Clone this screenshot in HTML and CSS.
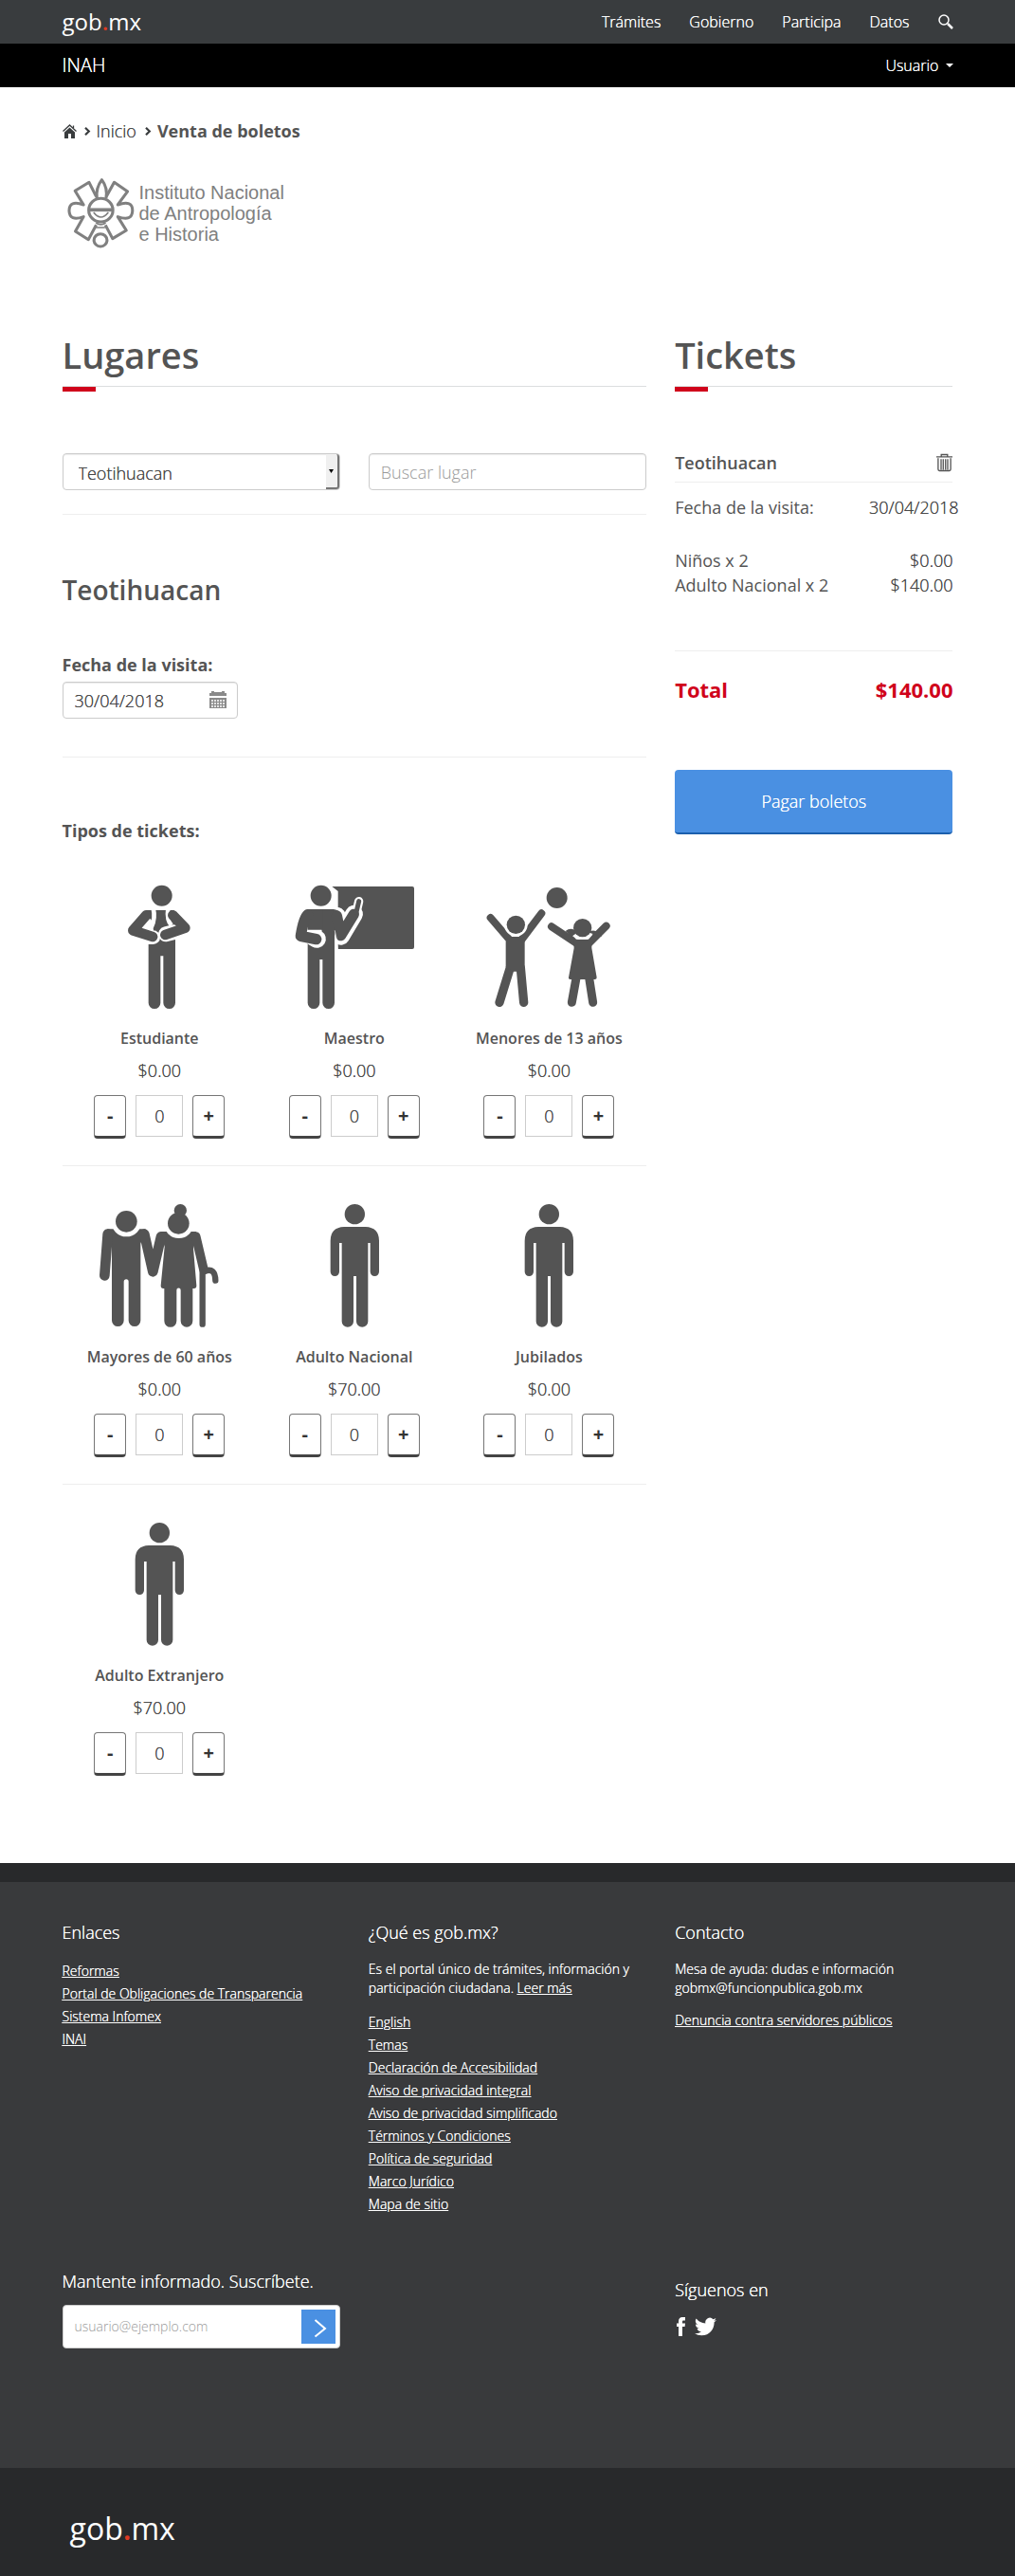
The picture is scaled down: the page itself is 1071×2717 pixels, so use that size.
FILE: index.html
```html
<!DOCTYPE html>
<html lang="es">
<head>
<meta charset="utf-8">
<meta name="viewport" content="width=device-width, initial-scale=1">
<title>Venta de boletos - INAH</title>
<link rel="stylesheet" href="styles.css">
</head>
<body>
<svg class="sprite" aria-hidden="true">
  <symbol id="adult" viewBox="746 57 450 396">
    <circle cx="972" cy="92" r="32"/>
    <path d="M938 132H1006Q1049 134 1049 176V274a14 14 0 0 1-28 0V183h-7V431a18.500 18.500 0 0 1-37 0V288h-9V431a18.500 18.500 0 0 1-37 0V183h-8V274a14 14 0 0 1-28 0V176Q895 134 938 132Z"/>
  </symbol>
</svg>

<header>
  <div class="topbar">
    <div class="container bar">
      <a class="brand" href="#">gob<span class="dot">.</span>mx</a>
      <nav class="nav">
        <a href="#">Trámites</a>
        <a href="#">Gobierno</a>
        <a href="#">Participa</a>
        <a href="#">Datos</a>
        <a href="#" aria-label="Buscar"><svg class="search" viewBox="0 0 16 16"><circle cx="6" cy="6" r="5" fill="none" stroke="#fff" stroke-width="1.500"/><path d="M10 10l5 5" stroke="#fff" stroke-width="2.500"/></svg></a>
      </nav>
    </div>
  </div>
  <div class="subbar">
    <div class="container bar">
      <a class="site" href="#">INAH</a>
      <button class="user" type="button">Usuario <span class="caret"></span></button>
    </div>
  </div>
</header>

<main class="container">
  <nav class="crumbs" aria-label="Ruta">
    <a href="#" aria-label="Portada"><svg class="home" viewBox="0 0 15 15"><path d="M7.500 3.500L13 8.500V15H9V10H6V15H2V8.500Z" fill="#393c3e"/><path d="M.5 7.500L7.500 1L14.500 7.500M11.500 1.500V4" fill="none" stroke="#393c3e" stroke-width="1.300"/></svg></a>
    <svg class="chev" viewBox="0 0 7 9"><path d="M1 .8L4.800 4.500L1 8.200" fill="none" stroke="#393c3e" stroke-width="2.200"/></svg>
    <a class="crumb" href="#">Inicio</a>
    <svg class="chev" viewBox="0 0 7 9"><path d="M1 .8L4.800 4.500L1 8.200" fill="none" stroke="#393c3e" stroke-width="2.200"/></svg>
    <strong>Venta de boletos</strong>
  </nav>

  <div class="inah">
    <svg viewBox="68 186 74 78" aria-hidden="true"><g transform="scale(.3444 .3333)" fill="none" stroke="#808080" stroke-width="9" stroke-linejoin="round">
      <circle cx="306" cy="665" r="37"/>
      <path d="M294 628Q290 595 309 569Q328 595 322 628"/>
      <path d="M292 622L270 577L227 604L253 648Q209 632 209 667Q210 702 253 686L228 732L268 758L292 712"/>
      <path d="M323 622L347 577L388 606L358 648Q404 632 403 667Q402 702 358 686L384 729L342 755L320 712"/>
      <circle cx="305" cy="760" r="20"/>
      <path d="M270 664H342" stroke-width="11"/>
      <path d="M284 672Q306 702 329 672M291 705Q306 716 321 705M291 720H319" stroke-width="5"/>
    </g></svg>
    <p>Instituto Nacional<br>de Antropología<br>e Historia</p>
  </div>

  <div class="columns">
    <section class="places">
      <h2 class="title">Lugares</h2>
      <form class="filters">
        <div class="select">
          <select class="field" aria-label="Lugar"><option>Teotihuacan</option></select>
          <span class="select-arrow"><svg width="5" height="4" viewBox="0 0 5 4"><path d="M0 0H5L2.500 4Z"/></svg></span>
        </div>
        <input class="field" type="text" placeholder="Buscar lugar" aria-label="Buscar lugar">
      </form>
      <h3 class="place">Teotihuacan</h3>
      <div class="visit">
        <label for="date">Fecha de la visita:</label>
        <div class="date">
          <input class="field" id="date" type="text" value="30/04/2018">
          <svg class="calendar" viewBox="0 0 18 18" aria-hidden="true"><path d="M0 2H2V0H5V1H13V0H16V2H18V5H0ZM0 7H18V18H0Z" fill="#8a8a8a"/><path d="M2 10h14M2 13h14M2 16h14" stroke="#fff" stroke-width="1.500" stroke-dasharray="2 1"/></svg>
        </div>
      </div>
      <h4 class="types">Tipos de tickets:</h4>

      <div class="row">
        <article class="ticket">
          <svg class="figure" viewBox="130 279 450 396" aria-hidden="true">
            <circle cx="363" cy="314" r="33"/>
            <path d="M314 360H402L406 400V653a19 19 0 0 1-38 0V505h-9V653a19 19 0 0 1-38 0V400Z"/>
            <g fill="none" stroke-linecap="round" stroke-linejoin="round">
              <path d="M336 354Q344 385 330 414M383 354Q378 392 394 408" stroke="#fff" stroke-width="14" stroke-linecap="butt"/>
              <path d="M312 404L318 446L336 446" stroke="#fff" stroke-width="44"/>
              <path d="M376 436L400 430" stroke="#fff" stroke-width="48"/>
              <path d="M314 376L272 424L334 444M398 376L437 416L374 438" stroke="#545454" stroke-width="32"/>
            </g>
          </svg>
          <h5>Estudiante</h5>
          <p>$0.00</p>
          <div class="stepper"><button type="button">-</button><input type="text" value="0" aria-label="Cantidad Estudiante"><button type="button">+</button></div>
        </article>
        <article class="ticket">
          <svg class="figure" viewBox="26 39 450 396" aria-hidden="true">
            <path d="M180 45H434Q440 45 440 51V237Q440 243 434 243H199V60Z"/>
            <g fill="none" stroke="#fff" stroke-linejoin="round" stroke-linecap="round">
              <path d="M195 138L208 202L250 132" stroke-width="56"/>
              <path d="M257 126L265 92" stroke-width="28"/>
            </g>
            <path d="M100 100H185L199 243V260H100Z" fill="#fff"/>
            <circle cx="145" cy="74" r="44" fill="#fff"/>
            <circle cx="145" cy="74" r="33"/>
            <path d="M103 117H185Q205 120 208 135L188 190V413a19 19 0 0 1-38 0V276h-9V413a19 19 0 0 1-38 0V160Z"/>
            <g fill="none" stroke-linejoin="round" stroke-linecap="round">
              <path d="M118 180L122 205L132 211" stroke="#fff" stroke-width="57"/>
              <path d="M105 117L150 117V182H103Z" fill="#545454"/>
              <path d="M103 134Q90 144 81 202L130 212M195 138L208 200L249 133" stroke="#545454" stroke-width="34"/>
              <path d="M257 126L265 92" stroke="#545454" stroke-width="15"/>
              <path d="M189 185L196 217" stroke="#fff" stroke-width="2"/>
            </g>
          </svg>
          <h5>Maestro</h5>
          <p>$0.00</p>
          <div class="stepper"><button type="button">-</button><input type="text" value="0" aria-label="Cantidad Maestro"><button type="button">+</button></div>
        </article>
        <article class="ticket">
          <svg class="figure" viewBox="643 39 450 396" aria-hidden="true">
            <circle cx="894" cy="81" r="33"/>
            <g fill="none" stroke="#545454" stroke-linecap="round">
              <path d="M684 144L746 216M845 130L780 216" stroke-width="24"/>
              <path d="M746 302L712 412M779 302L789 412" stroke-width="28"/>
              <path d="M877 172L955 224M1050 170L996 224" stroke-width="24"/>
              <path d="M955 335L941 412M996 335L1008 412" stroke-width="27"/>
            </g>
            <path d="M740 204H788L792 220V305L770 314H754L732 300V220ZM946 212H1004V240L1020 333Q1020 339 1014 339H936Q930 339 931 333L948 240Z"/>
            <circle cx="764" cy="166" r="37" fill="#fff"/>
            <circle cx="764" cy="166" r="29"/>
            <path d="M940 196Q975 206 1007 197L994 212H955Z" fill="#fff"/>
            <path d="M921 186Q940 170 960 190L940 204ZM1037 203Q1018 174 990 190Z"/>
            <circle cx="975" cy="176" r="29"/>
          </svg>
          <h5>Menores de 13 años</h5>
          <p>$0.00</p>
          <div class="stepper"><button type="button">-</button><input type="text" value="0" aria-label="Cantidad Menores de 13 años"><button type="button">+</button></div>
        </article>
      </div>

      <div class="row">
        <article class="ticket">
          <svg class="figure" viewBox="130 57 450 396" aria-hidden="true">
            <path d="M190 139H312L296 185V428a19 19 0 0 1-38 0V305a7 7 0 0 0-15 0V428a19 19 0 0 1-38 0V180ZM360 147H472L463 200L473 318Q473 327 465 327H461V430a19 19 0 0 1-38 0V332a6 6 0 0 0-13 0V430a19 19 0 0 1-39 0V327H368Q360 327 360 318L372 195Z"/>
            <g fill="none" stroke="#545454" stroke-linejoin="round" stroke-linecap="round">
              <path d="M192 155L182 286M308 155L335 274L361 163" stroke-width="32"/>
              <path d="M471 162L496 268" stroke-width="29"/>
              <path d="M492 275V440M500 272Q532 260 533 302" stroke-width="19"/>
            </g>
            <circle cx="251" cy="115" r="48" fill="#fff"/>
            <circle cx="417" cy="121" r="47" fill="#fff"/>
            <circle cx="251" cy="115" r="34"/>
            <circle cx="416" cy="121" r="34"/>
            <circle cx="422" cy="80" r="20"/>
          </svg>
          <h5>Mayores de 60 años</h5>
          <p>$0.00</p>
          <div class="stepper"><button type="button">-</button><input type="text" value="0" aria-label="Cantidad Mayores de 60 años"><button type="button">+</button></div>
        </article>
        <article class="ticket">
          <svg class="figure" aria-hidden="true"><use href="#adult"/></svg>
          <h5>Adulto Nacional</h5>
          <p>$70.00</p>
          <div class="stepper"><button type="button">-</button><input type="text" value="0" aria-label="Cantidad Adulto Nacional"><button type="button">+</button></div>
        </article>
        <article class="ticket">
          <svg class="figure" aria-hidden="true"><use href="#adult"/></svg>
          <h5>Jubilados</h5>
          <p>$0.00</p>
          <div class="stepper"><button type="button">-</button><input type="text" value="0" aria-label="Cantidad Jubilados"><button type="button">+</button></div>
        </article>
      </div>

      <div class="row">
        <article class="ticket">
          <svg class="figure" aria-hidden="true"><use href="#adult"/></svg>
          <h5>Adulto Extranjero</h5>
          <p>$70.00</p>
          <div class="stepper"><button type="button">-</button><input type="text" value="0" aria-label="Cantidad Adulto Extranjero"><button type="button">+</button></div>
        </article>
      </div>
    </section>

    <aside class="cart">
      <h2 class="title">Tickets</h2>
      <div class="cart-head">
        <h3>Teotihuacan</h3>
        <button type="button" aria-label="Eliminar"><svg viewBox="0 0 18 20"><path d="M0 3.500H18M5.500 3.500V1H12.500V3.500M2 5V17.500Q2 19 3.500 19H14.500Q16 19 16 17.500V5M5.300 6V18M7.700 6V18M10.300 6V18M12.700 6V18" fill="none" stroke="#545454" stroke-width="1.400"/></svg></button>
      </div>
      <div class="line when"><span>Fecha de la visita:</span><span class="light">30/04/2018</span></div>
      <div class="line"><span>Niños x 2</span><span class="light">$0.00</span></div>
      <div class="line"><span>Adulto Nacional x 2</span><span class="light">$140.00</span></div>
      <div class="total"><span>Total</span><span>$140.00</span></div>
      <button class="pay" type="button">Pagar boletos</button>
    </aside>
  </div>
</main>

<footer>
  <div class="foot-main">
    <div class="container foot-grid">
      <section>
        <h4>Enlaces</h4>
        <ul>
          <li><a href="#">Reformas</a></li>
          <li><a href="#">Portal de Obligaciones de Transparencia</a></li>
          <li><a href="#">Sistema Infomex</a></li>
          <li><a href="#">INAI</a></li>
        </ul>
      </section>
      <section>
        <h4>¿Qué es gob.mx?</h4>
        <p>Es el portal único de trámites, información y participación ciudadana. <a href="#">Leer más</a></p>
        <ul>
          <li><a href="#">English</a></li>
          <li><a href="#">Temas</a></li>
          <li><a href="#">Declaración de Accesibilidad</a></li>
          <li><a href="#">Aviso de privacidad integral</a></li>
          <li><a href="#">Aviso de privacidad simplificado</a></li>
          <li><a href="#">Términos y Condiciones</a></li>
          <li><a href="#">Política de seguridad</a></li>
          <li><a href="#">Marco Jurídico</a></li>
          <li><a href="#">Mapa de sitio</a></li>
        </ul>
      </section>
      <section>
        <h4>Contacto</h4>
        <p>Mesa de ayuda: dudas e información<br>gobmx@funcionpublica.gob.mx</p>
        <p><a href="#">Denuncia contra servidores públicos</a></p>
      </section>
    </div>
    <div class="container foot-grid">
      <form class="subscribe">
        <label for="mail">Mantente informado. Suscríbete.</label>
        <div class="mailbox">
          <input id="mail" type="email" placeholder="usuario@ejemplo.com">
          <button type="button" aria-label="Suscribirse"><svg viewBox="0 0 36 36"><path d="M14.500 11L25 20L14.500 28.500" fill="none" stroke="#fff" stroke-width="2"/></svg></button>
        </div>
      </form>
      <section class="social">
        <h4>Síguenos en</h4>
        <div class="social-links">
          <a href="#" aria-label="Facebook"><svg width="9" height="20" viewBox="0 0 9 20"><path d="M2 20V10H0V6.500H2V4.500Q2 0 6 0H9V3.500H7Q6 3.500 6 4.700V6.500H9L8.600 10H6V20Z" fill="#fff"/></svg></a>
          <a href="#" aria-label="Twitter"><svg width="23" height="20" viewBox="0 2 24 20"><path d="M24 4.600a9.900 9.900 0 0 1-2.800.8 4.900 4.900 0 0 0 2.200-2.700 9.900 9.900 0 0 1-3.100 1.200 4.900 4.900 0 0 0-8.400 4.500A14 14 0 0 1 1.700 3.200a4.900 4.900 0 0 0 1.500 6.500 4.900 4.900 0 0 1-2.200-.6v.1a4.900 4.900 0 0 0 3.900 4.800 4.900 4.900 0 0 1-2.200.1 4.900 4.900 0 0 0 4.600 3.400A9.900 9.900 0 0 1 0 19.500a14 14 0 0 0 7.500 2.200c9.100 0 14-7.500 14-14v-.6A10 10 0 0 0 24 4.600Z" fill="#fff"/></svg></a>
        </div>
      </section>
    </div>
  </div>
  <div class="foot-end"><div class="container"><a class="brand" href="#">gob<span class="dot">.</span>mx</a></div></div>
</footer>
</body>
</html>
```
FILE: styles.css
```css
* { box-sizing: border-box; }
body {
  margin: 0;
  font-family: "Open Sans", "Noto Sans", sans-serif;
  font-size: 18px;
  font-weight: 300;
  line-height: 26px;
  color: #484848;
  background: #fff;
}
h2, h3, h4, h5, p, ul { margin: 0; padding: 0; }
h2, h3, h4, h5, strong, label { color: #545454; }
ul { list-style: none; }
button, input, select { font: inherit; color: inherit; }
button { cursor: pointer; }
a { color: inherit; }
strong { font-weight: 700; }
.sprite { display: none; }
.container { max-width: 970px; margin: 0 auto; padding: 0 15px; }

/* Unblurred shadow firms up the thin strokes of the light weight */
.nav, .site, .user, .crumb, .ticket p, .light, .pay, .field,
.stepper input, .foot-grid, .mailbox input { text-shadow: 0 0 0 currentColor; }

/* Header */
.topbar { background: #393c3e; }
.subbar { background: #000; }
.bar { display: flex; justify-content: space-between; align-items: center; height: 46px; }
.brand { color: #fff; font-weight: 500; font-size: 24px; text-decoration: none; }
.dot { color: #e03a22; font-weight: 600; }
.nav { display: flex; align-items: center; gap: 30px; font-size: 16px; color: #fff; }
.nav a { text-decoration: none; }
.search { display: block; width: 16px; height: 16px; }
.site { color: #fff; font-size: 20px; text-decoration: none; }
.user {
  display: flex; align-items: center; gap: 7px;
  padding: 0; border: 0; background: none;
  color: #fff; font-size: 16px;
}
.caret { border: 4px solid transparent; border-top-color: #fff; border-bottom: 0; }

/* Breadcrumb and institute logo */
.crumbs { display: flex; align-items: center; gap: 6px; margin-top: 33px; }
.home { display: block; width: 15px; height: 15px; margin-right: 2px; }
.chev { width: 7px; height: 9px; }
.crumb { text-decoration: none; margin-right: 3px; }
.inah { display: flex; align-items: center; gap: 4px; margin: 35px 0 0 3px; }
.inah svg { width: 74px; height: 78px; }
.inah p { font: 20px/22px "Liberation Sans", Arial, sans-serif; color: #808080; }

/* Two-column layout */
.columns { display: grid; grid-template-columns: repeat(12, 1fr); column-gap: 30px; padding: 86px 0 64px; }
.places { grid-column: span 8; }
.cart { grid-column: span 4; }
.title {
  position: relative;
  padding-bottom: 9px;
  border-bottom: 1px solid #dcdedf;
  font-size: 38px; line-height: 48px; font-weight: 600;
}
.title::after {
  content: ""; position: absolute; left: 0; top: 100%;
  margin-top: 1px; width: 35px; height: 5px; background: #d0021b;
}
.field {
  display: block; width: 100%; height: 39px; padding: 0 12px;
  border: 1px solid #ccc; border-radius: 4px; background: #fff;
  box-shadow: inset 0 1px 1px rgba(0, 0, 0, .08);
}
.field::placeholder { color: #999; opacity: 1; }
.filters {
  display: grid; grid-template-columns: 1fr 1fr; gap: 30px;
  padding: 70px 0 25px; border-bottom: 1px solid #eee;
}
.select { position: relative; }
.select .field { appearance: none; padding-left: 16px; padding-top: 2px; }
.select-arrow {
  position: absolute; right: 1px; top: 1px; bottom: 1px; width: 14px;
  display: flex; align-items: center; justify-content: center;
  border: solid #767676; border-width: 0 2px 2px 0; border-radius: 0 3px 3px 0;
  background: #f0f0f0; pointer-events: none;
}
.place { margin-top: 59px; font-size: 28px; line-height: 40px; font-weight: 600; }
.visit { padding: 43px 0 40px; border-bottom: 1px solid #eee; }
.visit label { display: block; margin-bottom: 2px; font-weight: 700; line-height: 32px; }
.date { position: relative; width: 185px; }
.calendar { position: absolute; right: 12px; top: 10px; width: 18px; height: 18px; }
.types { margin: 64px 0 5px; font-size: 18px; font-weight: 700; }

/* Ticket grid */
.row { display: grid; grid-template-columns: repeat(3, 1fr); padding: 39px 0 28px; border-bottom: 1px solid #eee; }
.row:last-child { border-bottom: 0; }
.ticket { text-align: center; }
.figure { display: block; width: 150px; height: 132px; margin: 0 auto; fill: #545454; }
.ticket h5 { margin-top: 17px; font-size: 16px; line-height: 26px; font-weight: 600; }
.ticket p { margin-top: 8px; }
.stepper { display: flex; justify-content: center; gap: 10px; margin-top: 13px; }
.stepper input {
  width: 50px; height: 44px; padding: 0; text-align: center;
  border: 1px solid #ccc; background: #fff;
}
.stepper button {
  width: 34px; height: 46px; padding: 0;
  border: 1px solid #767676; border-bottom: 3px solid #444; border-radius: 4px;
  background: #fff; color: #333; font-size: 20px; font-weight: 700;
}

/* Cart */
.cart-head { display: flex; justify-content: space-between; align-items: center; margin-top: 67px; padding-bottom: 7px; border-bottom: 1px solid #eee; }
.cart-head h3 { font-size: 18px; font-weight: 600; }
.cart-head button { padding: 0; border: 0; background: none; }
.cart-head svg { display: block; width: 17px; height: 20px; }
.line { display: flex; justify-content: space-between; font-weight: 400; color: #545454; }
.light { font-weight: 300; color: #484848; }
.when { margin: 13px -6px 30px 0; }
.total {
  display: flex; justify-content: space-between;
  margin-top: 56px; padding-top: 27px; border-top: 1px solid #eee;
  font-size: 22px; font-weight: 700; color: #d0021b;
}
.pay {
  display: block; width: 100%; height: 68px; margin-top: 72px;
  border: 0; border-bottom: 2px solid #1b5fad; border-radius: 4px;
  background: #4a90e2; color: #fff;
}

/* Footer */
footer { color: #fff; font-size: 14px; line-height: 20px; }
footer h4, footer label { color: #fff; }
.foot-main { background: #393a3c; border-top: 20px solid #28292b; padding: 40px 0 126px; }
.foot-grid { display: grid; grid-template-columns: repeat(3, 1fr); column-gap: 30px; }
.foot-grid h4 { font-size: 18px; line-height: 26px; font-weight: 300; margin-bottom: 16px; }
.foot-grid p { margin-bottom: 14px; }
.foot-grid li { line-height: 24px; }
.subscribe { margin-top: 56px; }
.subscribe label { display: block; font-size: 18px; line-height: 26px; margin-bottom: 12px; }
.mailbox { display: flex; align-items: center; height: 46px; padding: 0 4px 0 0; background: #fff; border: 1px solid #ccc; border-radius: 4px; }
.mailbox input { flex: 1; min-width: 0; padding: 0 12px; border: 0; background: none; color: #484848; }
.mailbox input::placeholder { color: #999; opacity: 1; text-shadow: none; }
.field::placeholder { text-shadow: none; }
.mailbox button { padding: 0; border: 0; background: #4a90e2; }
.mailbox svg { display: block; width: 36px; height: 36px; }
.social { grid-column: 3; margin-top: 65px; }
.social-links { display: flex; gap: 10px; padding-left: 2px; }
.social-links svg { display: block; }
.foot-end { background: #28292b; padding: 47px 0 33px; }
.foot-end .brand { display: block; margin-left: 8px; font-size: 32px; line-height: 34px; }
```
